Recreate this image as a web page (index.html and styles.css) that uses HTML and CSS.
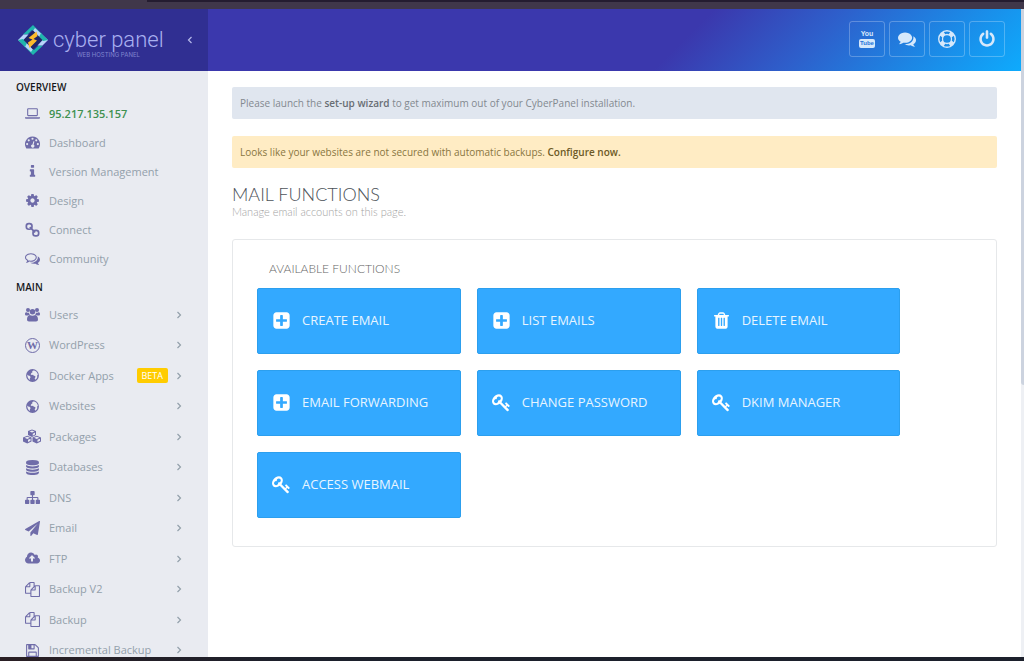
FILE: index.html
```html
<!DOCTYPE html>
<html lang="en">
<head>
<meta charset="utf-8">
<title>Mail Functions - CyberPanel</title>
<link rel="stylesheet" href="styles.css">
</head>
<body>
<svg class="sprite" aria-hidden="true">
  <symbol id="i-cog" viewBox="0 0 1792 1792"><path d="M1152 896q0-106-75-181t-181-75-181 75-75 181 75 181 181 75 181-75 75-181zm512-109v222q0 12-8 23t-20 13l-185 28q-19 54-39 91 35 50 107 138 10 12 10 25t-9 23q-27 37-99 108t-94 71q-12 0-26-9l-138-108q-44 23-91 38-16 136-29 186-7 28-36 28h-222q-14 0-24.500-8.500t-11.500-21.500l-28-184q-49-16-90-37l-141 107q-10 9-25 9-14 0-25-11-126-114-165-168-7-10-7-23 0-12 8-23 15-21 51-66.500t54-70.500q-27-50-41-99l-183-27q-13-2-21-12.500t-8-23.500v-222q0-12 8-23t19-13l186-28q14-46 39-92-40-57-107-138-10-12-10-24 0-10 9-23 26-36 98.500-107.500t94.500-71.500q13 0 26 10l138 107q44-23 91-38 16-136 29-186 7-28 36-28h222q14 0 24.500 8.500t11.500 21.500l28 184q49 16 90 37l142-107q9-9 24-9 13 0 25 10 129 119 165 170 7 8 7 22 0 12-8 23-15 21-51 66.500t-54 70.500q26 50 41 98l183 28q13 2 21 12.500t8 23.500z"/></symbol>
  <symbol id="i-power" viewBox="0 0 1792 1792"><path d="M1664 896q0 156-61 298t-164 245-245 164-298 61-298-61-245-164-164-245-61-298q0-182 80.500-343t226.500-270q43-32 95.500-25t83.500 50q32 42 24.500 94.500t-49.500 84.500q-98 74-151.500 181t-53.500 228q0 104 40.500 198.500t109.500 163.500 163.500 109.500 198.500 40.500 198.500-40.500 163.500-109.500 109.500-163.500 40.500-198.500q0-121-53.500-228t-151.500-181q-42-32-49.500-84.500t24.500-94.500q31-43 84-50t95 25q146 109 226.500 270t80.500 343zm-640-768v640q0 52-38 90t-90 38-90-38-38-90v-640q0-52 38-90t90-38 90 38 38 90z"/></symbol>
  <symbol id="i-comments" viewBox="0 0 1792 1792"><path d="M1408 768q0 139-94 257t-256.500 186.500-353.500 68.500q-86 0-176-16-124 88-278 128-36 9-86 16h-3q-11 0-20.500-8t-11.500-21q-1-3-1-6.500t.5-6.500 2-6l2.500-5 3.500-5.500 4-5 4.500-5 4-4.500q5-6 23-25t26-29.500 22.500-29 25-38.500 20.500-44q-124-72-195-177t-71-224q0-139 94-257t256.500-186.500 353.500-68.500 353.500 68.500 256.500 186.500 94 257zm384 256q0 120-71 224.500t-195 176.500q10 24 20.500 44t25 38.500 22.500 29 26 29.500 23 25q1 1 4 4.500t4.500 5 4 5 3.500 5.500l2.500 5 2 6 .5 6.500-1 6.500q-3 14-13 22t-22 7q-50-7-86-16-154-40-278-128-90 16-176 16-271 0-472-132 58 4 88 4 161 0 309-45t264-129q125-92 192-212t67-254q0-77-23-152 129 71 204 178t75 230z"/></symbol>
  <symbol id="i-comments-o" viewBox="0 0 1792 1792"><path d="M704 384q-153 0-286 52t-211.500 141-78.500 191q0 82 53 158t149 132l97 56-35 84q34-20 62-39l44-31 53 10q78 14 153 14 153 0 286-52t211.500-141 78.500-191-78.500-191-211.500-141-286-52zm0-128q191 0 353.500 68.500t256.500 186.500 94 257-94 257-256.500 186.500-353.500 68.500q-86 0-176-16-124 88-278 128-36 9-86 16h-3q-11 0-20.500-8t-11.500-21q-1-3-1-6.500t.5-6.500 2-6l2.500-5 3.500-5.500 4-5 4.500-5 4-4.500q5-6 23-25t26-29.500 22.500-29 25-38.500 20.500-44q-124-72-195-177t-71-224q0-139 94-257t256.500-186.500 353.500-68.500zm822 1169q10 24 20.500 44t25 38.500 22.500 29 26 29.500 23 25q1 1 4 4.500t4.500 5 4 5 3.500 5.500l2.500 5 2 6 .5 6.500-1 6.500q-3 14-13 22t-22 7q-50-7-86-16-154-40-278-128-90 16-176 16-271 0-472-132 58 4 88 4 161 0 309-45t264-129q125-92 192-212t67-254q0-77-23-152 129 71 204 178t75 230q0 120-71 224.500t-195 176.500z"/></symbol>
  <symbol id="i-plus" viewBox="0 0 1792 1792"><path d="M1408 960v-128q0-26-19-45t-45-19h-320v-320q0-26-19-45t-45-19h-128q-26 0-45 19t-19 45v320h-320q-26 0-45 19t-19 45v128q0 26 19 45t45 19h320v320q0 26 19 45t45 19h128q26 0 45-19t19-45v-320h320q26 0 45-19t19-45zm256-544v960q0 119-84.500 203.500t-203.500 84.500h-960q-119 0-203.500-84.500t-84.500-203.500v-960q0-119 84.500-203.500t203.500-84.500h960q119 0 203.500 84.500t84.500 203.500z"/></symbol>
  <symbol id="i-trash" viewBox="0 0 1792 1792"><path d="M704 1376v-704q0-14-9-23t-23-9h-64q-14 0-23 9t-9 23v704q0 14 9 23t23 9h64q14 0 23-9t9-23zm256 0v-704q0-14-9-23t-23-9h-64q-14 0-23 9t-9 23v704q0 14 9 23t23 9h64q14 0 23-9t9-23zm256 0v-704q0-14-9-23t-23-9h-64q-14 0-23 9t-9 23v704q0 14 9 23t23 9h64q14 0 23-9t9-23zm-544-992h448l-48-117q-7-9-17-11h-317q-10 2-17 11zm928 32v64q0 14-9 23t-23 9h-96v948q0 83-47 143.500t-113 60.500h-832q-66 0-113-58.500t-47-141.500v-952h-96q-14 0-23-9t-9-23v-64q0-14 9-23t23-9h309l70-167q15-37 54-63t79-26h320q40 0 79 26t54 63l70 167h309q14 0 23 9t9 23z"/></symbol>
  <symbol id="i-key" viewBox="0 0 1792 1792"><path d="M832 512q0-80-56-136t-136-56-136 56-56 136q0 42 19 83-41-19-83-19-80 0-136 56t-56 136 56 136 136 56 136-56 56-136q0-42-19-83 41 19 83 19 80 0 136-56t56-136zm851 704q0 17-49 66t-66 49q-9 0-28.500-16t-36.500-33-38.500-40-24.500-26l-96 96 220 220q28 28 28 68 0 42-39 81t-81 39q-40 0-68-28l-671-671q-176 131-365 131-163 0-265.500-102.500t-102.500-265.500q0-160 95-313t248-248 313-95q163 0 265.500 102.500t102.500 265.500q0 189-131 365l355 355 96-96q-3-3-26-24.500t-40-38.500-33-36.500-16-28.500q0-17 49-66t66-49q13 0 23 10 6 6 46 44.500t82 79.500 86.500 86 73 78 28.500 41z"/></symbol>
  <symbol id="i-database" viewBox="0 0 1792 1792"><path d="M896 768q237 0 443-43t325-127v170q0 69-103 128t-280 93.500-385 34.500-385-34.500-280-93.500-103-128v-170q119 84 325 127t443 43zm0 768q237 0 443-43t325-127v170q0 69-103 128t-280 93.500-385 34.500-385-34.500-280-93.500-103-128v-170q119 84 325 127t443 43zm0-384q237 0 443-43t325-127v170q0 69-103 128t-280 93.500-385 34.500-385-34.500-280-93.500-103-128v-170q119 84 325 127t443 43zm0-1152q208 0 385 34.500t280 93.500 103 128v128q0 69-103 128t-280 93.500-385 34.500-385-34.500-280-93.500-103-128v-128q0-69 103-128t280-93.500 385-34.500z"/></symbol>
  <symbol id="i-sitemap" viewBox="0 0 1792 1792"><path d="M1792 1248v320q0 40-28 68t-68 28h-320q-40 0-68-28t-28-68v-320q0-40 28-68t68-28h96v-192h-512v192h96q40 0 68 28t28 68v320q0 40-28 68t-68 28h-320q-40 0-68-28t-28-68v-320q0-40 28-68t68-28h96v-192h-512v192h96q40 0 68 28t28 68v320q0 40-28 68t-68 28h-320q-40 0-68-28t-28-68v-320q0-40 28-68t68-28h96v-192q0-52 38-90t90-38h512v-192h-96q-40 0-68-28t-28-68v-320q0-40 28-68t68-28h320q40 0 68 28t28 68v320q0 40-28 68t-68 28h-96v192h512q52 0 90 38t38 90v192h96q40 0 68 28t28 68z"/></symbol>
  <symbol id="i-plane" viewBox="0 0 1792 1792"><path d="M1764 11q33 24 27 64l-256 1536q-5 29-32 45-14 8-31 8-11 0-24-5l-453-185-242 295q-18 23-49 23-13 0-22-4-19-7-30.500-23.500t-11.500-36.500v-349l864-1059-1069 925-395-162q-37-14-40-55-2-40 32-59l1664-960q15-9 32-9 20 0 36 11z"/></symbol>
  <symbol id="i-cloud" viewBox="0 0 1920 1792"><path d="M1280 864q0-14-9-23l-352-352q-9-9-23-9t-23 9l-351 351q-10 12-10 24 0 14 9 23t23 9h224v352q0 13 9.500 22.500t22.500 9.500h192q13 0 22.500-9.500t9.500-22.500v-352h224q13 0 22.500-9.500t9.500-22.500zm640 288q0 159-112.500 271.500t-271.500 112.500h-1088q-185 0-316.500-131.500t-131.500-316.500q0-130 70-240t188-165q-2-30-2-43 0-212 150-362t362-150q156 0 285.500 87t188.500 231q71-62 166-62 106 0 181 75t75 181q0 76-41 138 130 31 213.500 135.500t83.500 238.500z"/></symbol>
  <symbol id="i-files" viewBox="0 0 1792 1792"><path d="M1696 384q40 0 68 28t28 68v1216q0 40-28 68t-68 28h-960q-40 0-68-28t-28-68v-288h-544q-40 0-68-28t-28-68v-672q0-40 20-88t48-76l408-408q28-28 76-48t88-20h416q40 0 68 28t28 68v328q68-40 128-40h416zm-544 213l-299 299h299v-299zm-640-384l-299 299h299v-299zm196 647l316-316v-416h-384v416q0 40-28 68t-68 28h-416v640h512v-256q0-40 20-88t48-76zm956 804v-1152h-384v416q0 40-28 68t-68 28h-416v640h896z"/></symbol>
  <symbol id="i-floppy" viewBox="0 0 1792 1792"><path d="M512 1536h768v-384h-768v384zm896 0h128v-896q0-14-10-38.500t-20-34.500l-281-281q-10-10-34-20t-39-10v416q0 40-28 68t-68 28h-576q-40 0-68-28t-28-68v-416h-128v1280h128v-416q0-40 28-68t68-28h832q40 0 68 28t28 68v416zm-384-928v-320q0-13-9.500-22.500t-22.500-9.500h-192q-13 0-22.500 9.500t-9.500 22.500v320q0 13 9.500 22.500t22.500 9.500h192q13 0 22.500-9.500t9.500-22.500zm640 32v928q0 40-28 68t-68 28h-1344q-40 0-68-28t-28-68v-1344q0-40 28-68t68-28h928q40 0 88 20t76 48l280 280q28 28 48 76t20 88z"/></symbol>
  <symbol id="i-info" viewBox="0 0 1792 1792"><path d="M1216 1344v128q0 26-19 45t-45 19h-512q-26 0-45-19t-19-45v-128q0-26 19-45t45-19h64v-384h-64q-26 0-45-19t-19-45v-128q0-26 19-45t45-19h384q26 0 45 19t19 45v576h64q26 0 45 19t19 45zm-128-1152v192q0 26-19 45t-45 19h-256q-26 0-45-19t-19-45v-192q0-26 19-45t45-19h256q26 0 45 19t19 45z"/></symbol>
  <symbol id="i-laptop" viewBox="0 0 28 28"><path fill-rule="evenodd" d="M6 4h16a2 2 0 0 1 2 2v11a2 2 0 0 1-2 2H6a2 2 0 0 1-2-2V6a2 2 0 0 1 2-2zm0 2v11h16V6zM0 21h28v1.500c0 1-1 1.500-2.500 1.500h-23C1 24 0 23.500 0 22.500z"/></symbol>
  <symbol id="i-dash" viewBox="0 0 28 28"><path fill-rule="evenodd" d="M14 3a14 14 0 0 1 11.800 21.500c-.3.400-.5.500-1 .5H3.200c-.5 0-.7-.1-1-.5A14 14 0 0 1 14 3zM4 15a2 2 0 1 0 0 4 2 2 0 0 0 0-4zm3-7a2 2 0 1 0 0 4 2 2 0 0 0 0-4zm7-3a2 2 0 1 0 0 4 2 2 0 0 0 0-4zm7 3a2 2 0 1 0 0 4 2 2 0 0 0 0-4zm3 7a2 2 0 1 0 0 4 2 2 0 0 0 0-4zm-8.300-3.500L14 17.600a3 3 0 1 0 2 .4l1.600-6z"/></symbol>
  <symbol id="i-link" viewBox="0 0 28 28"><g fill="none" stroke="currentColor" stroke-width="3.200"><rect x="2.500" y="3" width="10.500" height="10.500" rx="4.500"/><rect x="15" y="15.500" width="10.500" height="10.500" rx="4.500"/><path d="M9 9.500l10 10"/></g></symbol>
  <symbol id="i-users" viewBox="0 0 30 28"><circle cx="6" cy="5" r="4"/><circle cx="24" cy="5" r="4"/><circle cx="15" cy="8.500" r="5.500"/><path d="M3 9.500c2 1.200 3.500 1.500 5 1 .3 1.700 1 3 2 4-2 0-3.500.500-4.500 1.500H3c-2 0-3-1-3-3 0-2.500 1-4 3-3.500zM27 9.500c-2 1.200-3.500 1.500-5 1-.3 1.700-1 3-2 4 2 0 3.500.500 4.500 1.500H27c2 0 3-1 3-3 0-2.500-1-4-3-3.500zM9.500 15c3.500 2 7.500 2 11 0 3.500.5 5.500 4 5.500 9 0 2.500-1.500 4-4 4H8c-2.500 0-4-1.500-4-4 0-5 2-8.500 5.500-9z"/></symbol>
  <symbol id="i-globe" viewBox="0 0 28 28"><path fill-rule="evenodd" d="M14 2a12 12 0 1 1 0 24 12 12 0 0 1 0-24zm2.500 2.200L13 6l1.500 1.500L12 9.500l-1.500 2.300 2 1.200 2.500-.5 1.500 2 2.500.5.500 2-1.500 2.500 1.500 2.500c2-1.500 3-3 3.500-5l-.500-2.500 1.500-2c-.5-4-3.500-7.300-9-8.300zM4.300 12c-.3 4 1 8 5.200 10.500l-.500-3 1.500-2.500-2-2.500-2.500-.500z"/></symbol>
  <symbol id="i-cubes" viewBox="0 0 36 28"><path fill-rule="evenodd" d="M18 0l8 3.200v8L18 15l-8-3.800v-8zm0 2-5 2 5 2.200L23 4zm1.500 6.300v4L24 10.200v-4zM8.500 12.500l8.500 3.300v8L8.500 28 0 24v-8zm0 2.200-5.300 2 5.300 2.300 5.300-2.300zm1.500 6v4.400l5-2.400v-4.200zM27.500 12.500l8.500 3.300v8L27.500 28 19 24v-8zm0 2.200-5.300 2 5.300 2.300 5.300-2.300zm1.500 6v4.400l5-2.400v-4.200z"/></symbol>
  <symbol id="i-ring" viewBox="0 0 28 28"><path fill-rule="evenodd" d="M14 0a14 14 0 1 1 0 28 14 14 0 0 1 0-28zm0 8a6 6 0 1 0 0 12 6 6 0 0 0 0-12zM9 3.300l2.300 3.200a8 8 0 0 1 5.400 0L19 3.300a12 12 0 0 0-10 0zm0 21.400a12 12 0 0 0 10 0l-2.300-3.200a8 8 0 0 1-5.400 0zM3.300 9a12 12 0 0 0 0 10l3.200-2.300a8 8 0 0 1 0-5.400zm21.400 0-3.200 2.300a8 8 0 0 1 0 5.400l3.200 2.300a12 12 0 0 0 0-10z"/></symbol>
  <symbol id="i-right" viewBox="0 0 8 10"><path d="M2.500 2 5.500 5 2.500 8" fill="none" stroke="currentColor" stroke-width="1.200"/></symbol>
  <symbol id="i-left" viewBox="0 0 8 10"><path d="M5.500 2 2.500 5 5.500 8" fill="none" stroke="currentColor" stroke-width="1.200"/></symbol>
</svg>

<div class="screen">
  <div class="frame-top"></div>
  <div class="app">
    <header class="header">
      <div class="brand">
        <a class="logo" href="#" aria-label="Cyber Panel">
          <svg class="logo-mark" viewBox="0 0 30 30" aria-hidden="true">
            <path fill="#1fb5ad" d="M15 0l9 9-4.500 1L14 5 9.500 9.500 5 9.500z"/>
            <path fill="#1fb5ad" d="M15 30l-9-9 4.500-1L16 25l4.500-4.500H25z"/>
            <path fill="#b9d4fa" d="M0 15l5.500-5.500h5L6 14.500l9 9.500-2 3z"/>
            <path fill="#b9d4fa" d="M30 15l-5.500 5.500h-5l4.500-5L15 6l2-3z"/>
            <path fill="#1fb5ad" d="M30 15l-7-7-2 4 4 4zM0 15l7 7 2-4-4-4z"/>
            <path fill="#20256a" d="M15 5.500l9.500 9.500-9.500 9.500L5.500 15z"/>
            <path fill="#fdbb2c" d="M18.500 6.500 10.500 13l4 1.500-4.500 3 1.500 5.500 7.500-7.500-3.500-1.500 4-3z"/>
          </svg>
          <span class="logo-text"><span class="logo-name">cyber panel</span><span class="logo-tag">WEB HOSTING PANEL</span></span>
        </a>
        <button class="collapse" type="button" aria-label="Collapse sidebar"><svg class="chev"><use href="#i-left"/></svg></button>
      </div>
      <nav class="header-nav" aria-label="Quick links">
        <a class="tool tool-yt" href="#"><span class="yt-you">You</span><span class="yt-tube">Tube</span></a>
        <a class="tool" href="#" aria-label="Forums"><svg class="tool-ico"><use href="#i-comments"/></svg></a>
        <a class="tool" href="#" aria-label="Support"><svg class="tool-ico"><use href="#i-ring"/></svg></a>
        <a class="tool" href="#" aria-label="Log out"><svg class="tool-ico"><use href="#i-power"/></svg></a>
      </nav>
    </header>
    <div class="body">
      <nav class="sidebar" aria-label="Main menu">
        <h2 class="side-title">Overview</h2>
        <ul class="menu">
          <li><a class="item item-ip" href="#"><svg class="ico"><use href="#i-laptop"/></svg><span>95.217.135.157</span></a></li>
          <li><a class="item" href="#"><svg class="ico"><use href="#i-dash"/></svg><span>Dashboard</span></a></li>
          <li><a class="item" href="#"><svg class="ico"><use href="#i-info"/></svg><span>Version Management</span></a></li>
          <li><a class="item" href="#"><svg class="ico"><use href="#i-cog"/></svg><span>Design</span></a></li>
          <li><a class="item" href="#"><svg class="ico"><use href="#i-link"/></svg><span>Connect</span></a></li>
          <li><a class="item" href="#"><svg class="ico"><use href="#i-comments-o"/></svg><span>Community</span></a></li>
        </ul>
        <h2 class="side-title side-title-main">Main</h2>
        <ul class="menu menu-main">
          <li><a class="item" href="#"><svg class="ico"><use href="#i-users"/></svg><span>Users</span><svg class="chev"><use href="#i-right"/></svg></a></li>
          <li><a class="item" href="#"><span class="ico ico-wp" aria-hidden="true">W</span><span>WordPress</span><svg class="chev"><use href="#i-right"/></svg></a></li>
          <li><a class="item" href="#"><svg class="ico"><use href="#i-globe"/></svg><span>Docker Apps</span><span class="beta">BETA</span><svg class="chev"><use href="#i-right"/></svg></a></li>
          <li><a class="item" href="#"><svg class="ico"><use href="#i-globe"/></svg><span>Websites</span><svg class="chev"><use href="#i-right"/></svg></a></li>
          <li><a class="item" href="#"><svg class="ico ico-wide"><use href="#i-cubes"/></svg><span>Packages</span><svg class="chev"><use href="#i-right"/></svg></a></li>
          <li><a class="item" href="#"><svg class="ico"><use href="#i-database"/></svg><span>Databases</span><svg class="chev"><use href="#i-right"/></svg></a></li>
          <li><a class="item" href="#"><svg class="ico"><use href="#i-sitemap"/></svg><span>DNS</span><svg class="chev"><use href="#i-right"/></svg></a></li>
          <li><a class="item" href="#"><svg class="ico"><use href="#i-plane"/></svg><span>Email</span><svg class="chev"><use href="#i-right"/></svg></a></li>
          <li><a class="item" href="#"><svg class="ico"><use href="#i-cloud"/></svg><span>FTP</span><svg class="chev"><use href="#i-right"/></svg></a></li>
          <li><a class="item" href="#"><svg class="ico"><use href="#i-files"/></svg><span>Backup V2</span><svg class="chev"><use href="#i-right"/></svg></a></li>
          <li><a class="item" href="#"><svg class="ico"><use href="#i-files"/></svg><span>Backup</span><svg class="chev"><use href="#i-right"/></svg></a></li>
          <li><a class="item" href="#"><svg class="ico"><use href="#i-floppy"/></svg><span>Incremental Backup</span><svg class="chev"><use href="#i-right"/></svg></a></li>
        </ul>
      </nav>
      <main class="content">
        <p class="alert alert-info">Please launch the <a href="#">set-up wizard</a> to get maximum out of your CyberPanel installation.</p>
        <p class="alert alert-warn">Looks like your websites are not secured with automatic backups. <a href="#">Configure now.</a></p>
        <h1 class="title">Mail Functions</h1>
        <p class="subtitle">Manage email accounts on this page.</p>
        <section class="panel">
          <h2 class="panel-title">Available Functions</h2>
          <div class="cards">
            <a class="card" href="#"><svg class="card-ico"><use href="#i-plus"/></svg><span>Create Email</span></a>
            <a class="card" href="#"><svg class="card-ico"><use href="#i-plus"/></svg><span>List Emails</span></a>
            <a class="card" href="#"><svg class="card-ico"><use href="#i-trash"/></svg><span>Delete Email</span></a>
            <a class="card" href="#"><svg class="card-ico"><use href="#i-plus"/></svg><span>Email Forwarding</span></a>
            <a class="card" href="#"><svg class="card-ico"><use href="#i-key"/></svg><span>Change Password</span></a>
            <a class="card" href="#"><svg class="card-ico"><use href="#i-key"/></svg><span>DKIM Manager</span></a>
            <a class="card" href="#"><svg class="card-ico"><use href="#i-key"/></svg><span>Access Webmail</span></a>
          </div>
        </section>
      </main>
    </div>
    <div class="scrollbar"><div class="thumb"></div></div>
  </div>
  <div class="frame-bottom"></div>
</div>
</body>
</html>
```

FILE: styles.css
```css
* { box-sizing: border-box; }

body {
  margin: 0;
  overflow: hidden;
  background: #fff;
  color: #8a949c;
  font: 11px/16px "Open Sans", "Noto Sans", sans-serif;
}

a { color: inherit; text-decoration: none; }
h1, h2, p, ul { margin: 0; padding: 0; font-weight: 400; }
ul { list-style: none; }
svg { display: block; flex: none; fill: currentColor; }
.sprite { position: absolute; width: 0; height: 0; }

.screen { display: flex; flex-direction: column; height: 100vh; }
.frame-top {
  flex: none;
  height: 9px;
  background: linear-gradient(#241c30, #241c30) 147px 0 / 100% 2px no-repeat #40374a;
}
.frame-bottom { flex: none; height: 4px; background: linear-gradient(90deg, #2a1f24, #1c202c 30%); }

.app {
  position: relative;
  display: flex;
  flex-direction: column;
  flex: 1;
  min-height: 0;
  padding-right: 3px;
}

/* Header */
.header {
  display: flex;
  flex: none;
  align-items: center;
  justify-content: space-between;
  height: 62px;
  background: linear-gradient(135deg, #3b38ad 0%, #3b38ad 66%, #2e5fcb 78%, #1d86e4 89%, #0eabfd 100%);
}
.brand {
  display: flex;
  align-items: center;
  justify-content: space-between;
  align-self: stretch;
  width: 208px;
  padding: 0 14px 0 18px;
  background: #302f92;
}
.logo { display: flex; align-items: center; gap: 5px; }
.logo-mark { width: 30px; height: 30px; }
.logo-text { display: flex; flex-direction: column; align-items: center; padding-top: 6px; color: #a9b0f0; }
.logo-name { font: 300 22px/24px Roboto, "Open Sans", sans-serif; }
.logo-tag { color: #8085cf; font: 6px/6px Inter, "Open Sans", sans-serif; }
.collapse { padding: 0; border: 0; background: none; color: #b5b9ea; }
.header-nav { display: flex; gap: 4px; padding: 0 16px 2px 0; }
.tool {
  display: flex;
  align-items: center;
  justify-content: center;
  width: 36px;
  height: 36px;
  border: 1px solid rgba(255, 255, 255, .25);
  border-radius: 3px;
  color: #d6e8fb;
}
.tool-ico { width: 18px; height: 18px; }
.tool-yt { flex-direction: column; gap: 1px; font: 700 7px/8px "Liberation Sans", sans-serif; }
.yt-tube {
  padding: 0 1px;
  border-radius: 2px;
  background: #d6e8fb;
  color: #2774d9;
  font-size: 6px;
  line-height: 9px;
}

.body { display: flex; flex: 1; min-height: 0; }

/* Sidebar */
.sidebar { flex: none; width: 208px; overflow: hidden; background: #e9ebf1; }
.side-title {
  padding: 8px 16px 4px;
  color: #16181c;
  font-size: 10px;
  font-weight: 600;
  line-height: 16px;
  text-transform: uppercase;
}
.side-title-main { padding: 6px 16px 4px; }
.item {
  display: flex;
  align-items: center;
  height: 29px;
  padding: 0 25px 0 24px;
  color: #93a0ab;
}
.item-ip { color: #3f9150; font-weight: 600; }
.menu-main .item { height: 30px; }
.menu-main li:nth-child(odd) .item { height: 31px; }
.ico { flex: none; width: 15px; height: 15px; margin: 0 9px 0 1px; color: #6f6ca9; }
.ico-wide { width: 18px; margin: 0 8px 0 -1px; }
.ico-wp {
  border: 1px solid;
  border-radius: 50%;
  font: 700 11px/13px "Liberation Serif", serif;
  display: flex;
  justify-content: center;
}
.chev { width: 8px; height: 10px; margin-left: auto; }
.beta {
  margin: 0 0 0 auto;
  padding: 0 5px;
  border-radius: 2px;
  background: #fc0;
  color: #fff;
  font-size: 9px;
  line-height: 15px;
}
.beta + .chev { margin-left: 7px; }

/* Content */
.content { flex: 1; min-width: 0; padding: 16px 24px; }
.alert { margin-bottom: 17px; padding: 8px; border-radius: 2px; font-size: 10px; }
.alert a { font-weight: 600; }
.alert-info { background: #e0e6ef; color: #83898f; }
.alert-info a { color: #686d73; }
.alert-warn { margin-bottom: 14px; background: #ffecc4; color: #89763f; }
.alert-warn a { color: #6d5a26; }
.title {
  color: #4d5359;
  font: 300 18px/24px Lato, "Open Sans", sans-serif;
  text-transform: uppercase;
}
.subtitle { color: #a3a3a3; font: 300 11px/12px Lato, "Open Sans", sans-serif; }

.panel {
  margin-top: 21px;
  padding: 21px 24px 28px;
  border: 1px solid #e6e8ea;
  border-radius: 3px;
}
.panel-title {
  padding: 0 12px 11px;
  color: #666;
  font: 300 12px/16px Lato, "Open Sans", sans-serif;
  text-transform: uppercase;
}
.cards { display: grid; grid-template-columns: repeat(3, 1fr); gap: 16px; width: 90%; }
.card {
  display: flex;
  align-items: center;
  gap: 11px;
  min-height: 66px;
  padding: 0 14px 2px;
  border: 1px solid #2c9fee;
  border-radius: 2px;
  background: #33a9ff;
  color: #e8f5ff;
  font-size: 13px;
  text-transform: uppercase;
}
.card-ico { width: 19px; height: 19px; color: #fff; }

/* Page scrollbar, drawn over the right edge */
.scrollbar { position: absolute; top: 0; right: 0; bottom: 0; width: 3px; background: #eef0f4; }
.thumb { height: 58%; border-radius: 0 0 0 3px; background: #ccd3df; }
```
